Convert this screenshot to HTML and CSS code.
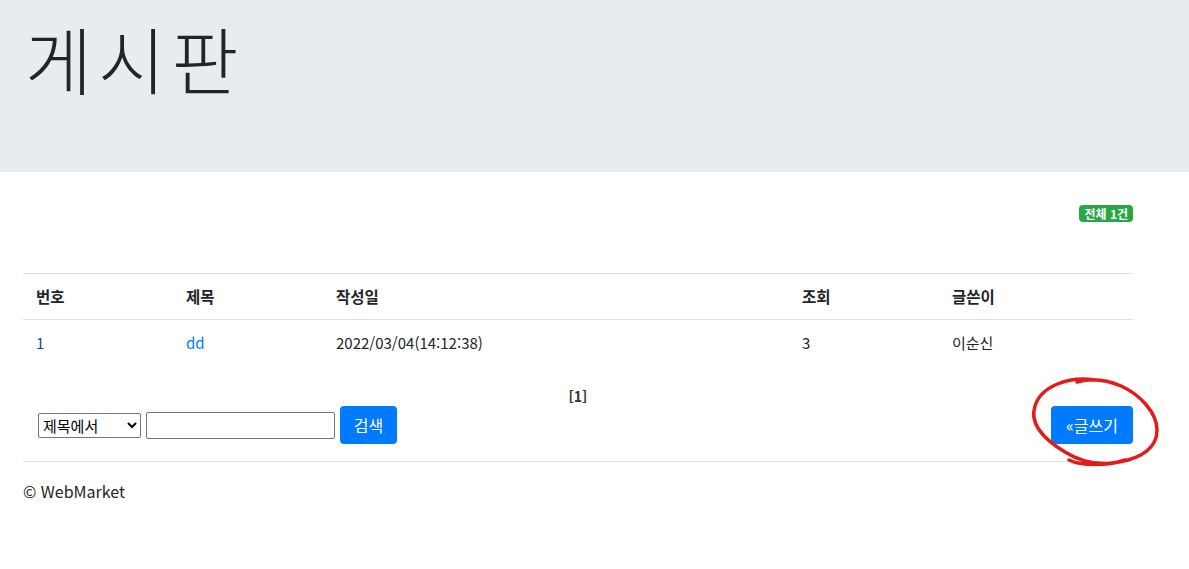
FILE: index.html
```html
<!DOCTYPE html>
<html lang="ko">
<head>
<meta charset="utf-8">
<link rel="stylesheet" href="styles.css">
</head>
<body>
<div class="jumbotron">
  <div class="container">
    <h1 class="display">게시판</h1>
  </div>
</div>
<div class="container">
  <div class="count-row"><span class="badge">전체 1건</span></div>
  <table class="board">
    <thead>
      <tr><th class="c1">번호</th><th class="c2">제목</th><th class="c3">작성일</th><th class="c4">조회</th><th class="c5">글쓴이</th></tr>
    </thead>
    <tbody>
      <tr><td class="num">1</td><td><a class="link" href="#">dd</a></td><td>2022/03/04(14:12:38)</td><td>3</td><td>이순신</td></tr>
    </tbody>
  </table>
  <div class="pager">[1]</div>
  <div class="actions">
    <form class="search">
      <select class="sel"><option>제목에서</option></select>
      <input class="txt" type="text">
      <button class="btn" type="button">검색</button>
    </form>
    <div class="write-wrap">
      <button class="btn write" type="button">«글쓰기</button>
      <svg class="scribble" width="145" height="100" viewBox="0 0 145 100">
        <path d="M72 6 C46 2 18 12 12 32 C6 50 22 66 42 78 C58 88 76 92 96 88 C118 84 134 74 134 56 C134 38 116 20 98 12 C84 6 68 4 54 8 M46 86 C58 92 84 92 102 86" fill="none" stroke="#e51b1b" stroke-width="3.5" stroke-linecap="round"/>
      </svg>
    </div>
  </div>
  <hr class="rule">
  <footer class="foot">© WebMarket</footer>
</div>
</body>
</html>
```

FILE: styles.css
```css
* { box-sizing: border-box; }
body {
  margin: 0;
  font-family: "Noto Sans CJK KR", "Noto Sans", "Liberation Sans", sans-serif;
  font-size: 16px;
  color: #212529;
  background: #fff;
}
.container {
  width: 1140px;
  margin-left: 8px;
  padding: 0 15px;
}
.jumbotron {
  background: #e9ecef;
  height: 172px;
  padding-top: 14px;
}
.display {
  margin: 0;
  padding-left: 2px;
  font-size: 73px;
  font-weight: 300;
  line-height: 1.2;
  letter-spacing: 6px;
}
.count-row {
  display: flex;
  justify-content: flex-end;
  margin-top: 33px;
}
.badge {
  background: #28a745;
  color: #fff;
  font-size: 12px;
  font-weight: 700;
  line-height: 1;
  padding: 3px 5px 2px;
  border-radius: 4px;
}
.board {
  width: 100%;
  border-collapse: collapse;
  margin-top: 51px;
}
.board th, .board td {
  text-align: left;
  padding: 12px 13px;
  border-top: 1px solid #dee2e6;
  font-size: 15px;
  line-height: 21px;
}
.board th { font-weight: 700; font-size: 15.5px; }
.board thead th { border-bottom: 1px solid #dee2e6; }
.board tbody td { border-top: none; }
.c1, .c2, .c4 { width: 150px; }
.c3 { width: 466px; }
.num { color: #0d4f9e; }
.link { color: #007bff; text-decoration: none; }
.pager {
  text-align: center;
  font-weight: 700;
  font-size: 14px;
  color: #333;
  margin-top: 22px;
  line-height: 18px;
}
.actions {
  display: flex;
  justify-content: space-between;
  align-items: flex-start;
  margin-top: 1px;
}
.search {
  display: flex;
  align-items: center;
  margin-left: 15px;
  gap: 5px;
}
.sel {
  width: 103px;
  height: 25px;
  font-family: inherit;
  font-size: 15px;
  border: 1px solid #767676;
  border-radius: 2px;
  background: #fff;
  color: #000;
}
.txt {
  width: 189px;
  height: 27px;
  border: 1px solid #767676;
  border-radius: 2px;
}
.btn {
  background: #007bff;
  color: #fff;
  border: none;
  border-radius: 4px;
  font-family: inherit;
  font-size: 16px;
  height: 38px;
  width: 57px;
  padding: 0;
}
.write-wrap {
  position: relative;
}
.write {
  width: 82px;
}
.scribble {
  position: absolute;
  left: -28px;
  top: -32px;
  pointer-events: none;
}
.rule {
  border: 0;
  border-top: 1px solid #dee2e6;
  margin: 17px 0 0;
}
.foot {
  margin-top: 17px;
  font-size: 16px;
}
```
